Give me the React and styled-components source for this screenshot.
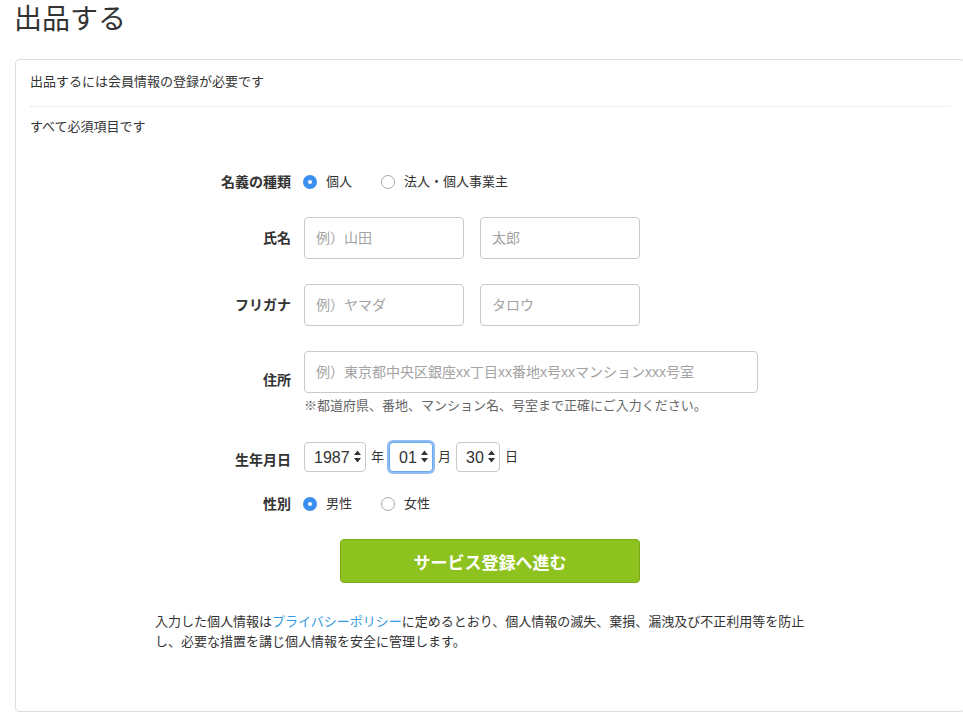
import React from 'react';
import styled, { createGlobalStyle } from 'styled-components';

const GlobalStyle = createGlobalStyle`
  body {
    margin: 0;
    background: #fff;
    color: #333;
    font-family: "Liberation Sans", "Noto Sans CJK JP", sans-serif;
  }
`;

const Page = styled.div`
  width: 963px;
  overflow: hidden;
`;

const Title = styled.h1`
  margin: 0 0 19px;
  padding-left: 14px;
  font-size: 28px;
  font-weight: normal;
  line-height: 40px;
  color: #333;
`;

const Card = styled.section`
  box-sizing: border-box;
  width: 950px;
  height: 653px;
  margin-left: 15px;
  padding: 0 14px;
  border: 1px solid #ddd;
  border-radius: 4px;
`;

const Notice = styled.p`
  margin: 0;
  font-size: 13px;
  line-height: 20px;
  padding: ${props => props.$first ? '12px 0 14px' : '10px 0 0'};
  border-bottom: ${props => props.$first ? '1px dotted #e2e2e2' : 'none'};
`;

const Form = styled.form`
  display: flex;
  flex-direction: column;
  gap: 25px;
  padding-top: 35px;
`;

const Row = styled.div`
  display: flex;
  align-items: center;
  gap: 13px;
  margin-top: ${props => props.$top || 0}px;
`;

const Label = styled.div`
  width: 261px;
  flex-shrink: 0;
  text-align: right;
  font-size: 14px;
  font-weight: bold;
  line-height: 20px;
  padding-top: ${props => props.$down || 0}px;
  padding-bottom: ${props => props.$up || 0}px;
`;

const Field = styled.div`
  display: flex;
  flex-direction: column;
  gap: 4px;
`;

const Inline = styled.div`
  display: flex;
  align-items: center;
  gap: ${props => props.$gap}px;
`;

const Option = styled.label`
  display: flex;
  align-items: center;
  gap: 9px;
  margin-left: -1px;
  font-size: 13px;
  line-height: 20px;
`;

const Radio = styled.input.attrs({ type: 'radio' })`
  appearance: none;
  box-sizing: border-box;
  width: 14px;
  height: 14px;
  margin: 0;
  border-radius: 50%;
  border: 1px solid #a9a9a9;
  background: #fff;

  &:checked {
    border: 5px solid #3a8ff0;
    background: #fff;
  }
`;

const TextInput = styled.input`
  box-sizing: border-box;
  width: ${props => props.$width}px;
  height: 42px;
  padding: 0 11px;
  border: 1px solid #c9c9c9;
  border-radius: 4px;
  font-family: inherit;
  font-size: 14px;
  color: #333;

  &::placeholder {
    color: #a3a3a3;
  }
`;

const Note = styled.div`
  font-size: 13px;
  line-height: 18px;
  color: #666;
`;

const SelectWrap = styled.div`
  position: relative;
  display: inline-flex;
`;

const Select = styled.select`
  appearance: none;
  box-sizing: border-box;
  width: ${props => props.$width}px;
  height: 30px;
  padding: 0 0 0 9px;
  border: 1px solid ${props => props.$focused ? '#6aa9ec' : '#c9c9c9'};
  border-radius: 4px;
  box-shadow: ${props => props.$focused ? '0 0 0 2px rgba(105, 165, 240, 0.75)' : 'none'};
  background: #fff;
  font-family: "Liberation Sans", sans-serif;
  font-size: 16px;
  color: #333;
`;

const Arrow = styled.svg`
  position: absolute;
  right: 5px;
  top: 8px;
  pointer-events: none;
`;

const Unit = styled.span`
  font-size: 13px;
  line-height: 20px;
`;

const Submit = styled.button`
  display: block;
  width: 300px;
  height: 44px;
  margin: 25px auto 0;
  border: 1px solid #7bab18;
  border-radius: 4px;
  background: #8dc21f;
  color: #fff;
  font-family: inherit;
  font-size: 17px;
  font-weight: bold;
`;

const Footer = styled.p`
  width: 656px;
  margin: 29px 0 0 125px;
  font-size: 13px;
  line-height: 20px;

  a {
    color: #2f9be0;
    text-decoration: none;
  }
`;

const DateSelect = ({ value, width, focused }) => (
  <SelectWrap>
    <Select $width={width} $focused={focused} defaultValue={value}>
      <option value={value}>{value}</option>
    </Select>
    <Arrow width="7" height="13" viewBox="0 0 7 13">
      <path d="M3.5 0.5 L7 5 H0 Z M3.5 12.5 L7 8 H0 Z" fill="#333" />
    </Arrow>
  </SelectWrap>
);

export default function App() {
  return (
    <Page>
      <GlobalStyle />
      <Title>出品する</Title>
      <Card>
        <Notice $first>出品するには会員情報の登録が必要です</Notice>
        <Notice>すべて必須項目です</Notice>
        <Form onSubmit={e => e.preventDefault()}>
          <Row>
            <Label>名義の種類</Label>
            <Inline $gap={30}>
              <Option><Radio name="kind" defaultChecked />個人</Option>
              <Option><Radio name="kind" />法人・個人事業主</Option>
            </Inline>
          </Row>
          <Row>
            <Label>氏名</Label>
            <Inline $gap={16}>
              <TextInput $width={160} placeholder="例）山田" />
              <TextInput $width={160} placeholder="太郎" />
            </Inline>
          </Row>
          <Row>
            <Label>フリガナ</Label>
            <Inline $gap={16}>
              <TextInput $width={160} placeholder="例）ヤマダ" />
              <TextInput $width={160} placeholder="タロウ" />
            </Inline>
          </Row>
          <Row>
            <Label $up={6}>住所</Label>
            <Field>
              <TextInput $width={454} placeholder="例）東京都中央区銀座xx丁目xx番地x号xxマンションxxx号室" />
              <Note>※都道府県、番地、マンション名、号室まで正確にご入力ください。</Note>
            </Field>
          </Row>
          <Row $top={2}>
            <Label $down={6}>生年月日</Label>
            <Inline $gap={5}>
              <DateSelect value="1987" width={62} />
              <Unit>年</Unit>
              <DateSelect value="01" width={44} focused />
              <Unit>月</Unit>
              <DateSelect value="30" width={44} />
              <Unit>日</Unit>
            </Inline>
          </Row>
          <Row $top={-3}>
            <Label>性別</Label>
            <Inline $gap={30}>
              <Option><Radio name="sex" defaultChecked />男性</Option>
              <Option><Radio name="sex" />女性</Option>
            </Inline>
          </Row>
        </Form>
        <Submit type="button">サービス登録へ進む</Submit>
        <Footer>
          入力した個人情報は<a href="#privacy">プライバシーポリシー</a>に定めるとおり、個人情報の滅失、棄損、漏洩及び不正利用等を防止し、必要な措置を講じ個人情報を安全に管理します。
        </Footer>
      </Card>
    </Page>
  );
}
